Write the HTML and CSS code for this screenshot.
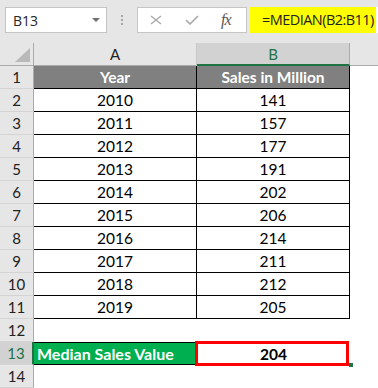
FILE: index.html
```html
<!DOCTYPE html>
<html>
<head>
<meta charset="utf-8">
<link rel="stylesheet" href="styles.css">
</head>
<body>
<div class="toolbar">
  <div class="namebox"><span class="ref">B13</span><span class="dd"></span></div>
  <div class="grip"><i></i><i></i><i></i></div>
  <div class="fxbox">
    <svg class="ic-x" width="12" height="10" viewBox="0 0 12 10"><path d="M1 1 L11 9 M11 1 L1 9" stroke="#a8a8a8" stroke-width="1.4" fill="none"/></svg>
    <svg class="ic-ok" width="14" height="10" viewBox="0 0 14 10"><path d="M1 5 L5 9 L13 1" stroke="#a8a8a8" stroke-width="1.6" fill="none"/></svg>
    <span class="fx">fx</span>
  </div>
  <div class="formula"><span class="hl">=MEDIAN(B2:B11)</span></div>
</div>
<div class="sheet">
  <div class="corner"><span class="tri"></span></div>
  <div class="ch">A</div>
  <div class="ch sel">B</div>
  <div class="ch last"></div>

  <div class="rh">1</div><div class="c th">Year</div><div class="c th">Sales in Million</div><div class="e"></div>
  <div class="rh">2</div><div class="c">2010</div><div class="c">141</div><div class="e"></div>
  <div class="rh">3</div><div class="c">2011</div><div class="c">157</div><div class="e"></div>
  <div class="rh">4</div><div class="c">2012</div><div class="c">177</div><div class="e"></div>
  <div class="rh">5</div><div class="c">2013</div><div class="c">191</div><div class="e"></div>
  <div class="rh">6</div><div class="c">2014</div><div class="c">202</div><div class="e"></div>
  <div class="rh">7</div><div class="c">2015</div><div class="c">206</div><div class="e"></div>
  <div class="rh">8</div><div class="c">2016</div><div class="c">214</div><div class="e"></div>
  <div class="rh">9</div><div class="c">2017</div><div class="c">211</div><div class="e"></div>
  <div class="rh">10</div><div class="c">2018</div><div class="c">212</div><div class="e"></div>
  <div class="rh">11</div><div class="c">2019</div><div class="c">205</div><div class="e"></div>
  <div class="rh">12</div><div class="e"></div><div class="e"></div><div class="e"></div>
  <div class="rh sel">13</div><div class="green">Median Sales Value</div><div class="result">204<span class="handle"></span></div><div class="e"></div>
  <div class="rh">14</div><div class="e"></div><div class="e"></div><div class="e"></div>
</div>
</body>
</html>
```

FILE: styles.css
```css
html, body {
  margin: 0;
  padding: 0;
}
body {
  width: 378px;
  height: 388px;
  overflow: hidden;
  background: #ffffff;
  font-family: Lato, "Open Sans", sans-serif;
}

/* formula toolbar */
.toolbar {
  height: 43px;
  box-sizing: border-box;
  background: #e6e6e6;
  display: flex;
  align-items: flex-start;
  padding-top: 7px;
}
.namebox {
  margin-left: 5px;
  width: 102px;
  height: 26px;
  box-sizing: border-box;
  border: 1px solid #c6c6c6;
  background: #fff;
  display: flex;
  align-items: center;
  justify-content: space-between;
  padding: 0 6px 0 7px;
  font-family: "Open Sans", sans-serif;
  font-size: 14px;
  color: #262626;
}
.dd {
  width: 0;
  height: 0;
  border-left: 4px solid transparent;
  border-right: 4px solid transparent;
  border-top: 4px solid #707070;
}
.grip {
  width: 30px;
  display: flex;
  flex-direction: column;
  align-items: center;
  gap: 2px;
  padding-top: 8px;
}
.grip i {
  display: block;
  width: 2px;
  height: 2px;
  background: #a6a6a6;
}
.fxbox {
  width: 110px;
  height: 26px;
  box-sizing: border-box;
  border: 1px solid #c6c6c6;
  background: #fff;
  display: flex;
  align-items: center;
  padding-left: 12px;
}
.ic-ok {
  margin-left: 23px;
}
.fx {
  margin-left: 22px;
  font-family: "Liberation Serif", serif;
  font-style: italic;
  font-size: 16px;
  color: #555;
  letter-spacing: -1px;
}
.formula {
  margin-left: 3px;
  flex: 1;
  height: 26px;
  background: #fff;
  display: flex;
}
.hl {
  box-sizing: border-box;
  background: #ffff00;
  padding: 0 2px 0 12px;
  font-family: "Open Sans", sans-serif;
  font-size: 14.5px;
  letter-spacing: -0.55px;
  line-height: 26px;
  color: #222;
  white-space: nowrap;
}

/* sheet grid */
.sheet {
  display: grid;
  grid-template-columns: 34px 163px 153px 1fr;
  grid-template-rows: repeat(15, 23px);
}
.sheet > div {
  box-sizing: border-box;
}
.corner {
  background: #e6e6e6;
  border-right: 1px solid #ababab;
  border-bottom: 1px solid #ababab;
  display: flex;
  align-items: flex-end;
  justify-content: flex-end;
  padding: 0 3px 3px 0;
}
.tri {
  width: 0;
  height: 0;
  border-left: 15px solid transparent;
  border-bottom: 14px solid #b9b9b9;
}
.ch {
  background: #e6e6e6;
  border-right: 1px solid #c8c8c8;
  border-bottom: 1px solid #ababab;
  display: flex;
  align-items: center;
  justify-content: center;
  font-size: 15px;
  color: #222;
}
.ch.sel {
  background: #d2d2d2;
  border-bottom: 2px solid #217346;
  border-right: 1px solid #ababab;
  color: #217346;
}
.ch.last {
  border-right: none;
}
.rh {
  background: #e6e6e6;
  border-right: 1px solid #ababab;
  border-bottom: 1px solid #d4d4d4;
  display: flex;
  align-items: center;
  justify-content: center;
  font-size: 15px;
  color: #222;
}
.rh.sel {
  background: #d2d2d2;
  color: #217346;
  border-right: 2px solid #217346;
}
.c {
  border-right: 1px solid #000;
  border-bottom: 1px solid #000;
  display: flex;
  align-items: center;
  justify-content: center;
  font-size: 15.5px;
  color: #000;
}
.c.th {
  background: #808080;
  color: #fff;
  font-weight: bold;
}
.green {
  background: #00b050;
  border-top: 1px solid #000;
  border-bottom: 1px solid #000;
  color: #fff;
  font-weight: bold;
  font-size: 16px;
  display: flex;
  align-items: center;
  padding-left: 3px;
}
.result {
  position: relative;
  display: flex;
  align-items: center;
  justify-content: center;
  font-weight: bold;
  font-size: 15.5px;
  color: #000;
}
.result::after {
  content: "";
  position: absolute;
  left: -2px;
  top: -1px;
  width: 154px;
  height: 25px;
  box-sizing: border-box;
  border: 3px solid #ff0000;
}
.handle {
  position: absolute;
  right: -3px;
  bottom: -2px;
  width: 4px;
  height: 4px;
  background: #217346;
}
```
